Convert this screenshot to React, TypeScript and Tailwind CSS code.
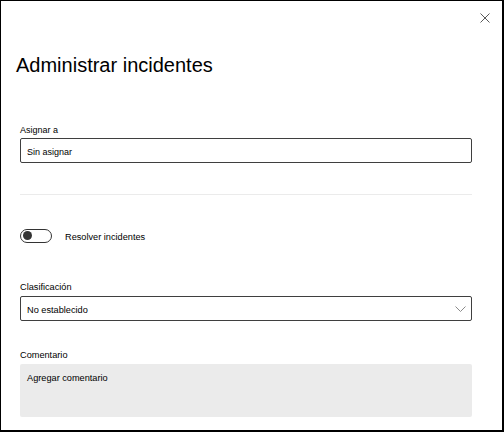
export default function App() {
  return (
    <div
      className="w-[504px] h-[432px] bg-white border-t border-l border-r-2 border-b-2 border-black flex flex-col text-black"
      style={{ fontFamily: '"Liberation Sans", Arial, sans-serif' }}
    >
      {/* Close */}
      <div className="flex justify-end pt-[12px] pr-[12px]">
        <svg width="10" height="10" viewBox="0 0 10 10" aria-label="Cerrar">
          <path d="M0.5 0.5 L9.5 9.5 M9.5 0.5 L0.5 9.5" stroke="#5a5a5a" strokeWidth="1" fill="none" />
        </svg>
      </div>

      {/* Title */}
      <h1 className="mt-[28px] pl-[15px] text-[20px] leading-[28px] font-normal text-black">
        Administrar incidentes
      </h1>

      <div className="pl-[19px] pr-[30px] flex flex-col">
        {/* Asignar a */}
        <label className="mt-[45px] text-[9px] leading-[12px]">Asignar a</label>
        <div className="mt-[2px] h-[25px] border border-[#3f3f3f] rounded-[2px] pl-[6px] pt-[7px] pb-[4px] text-[9px] leading-[12px]">
          Sin asignar
        </div>

        {/* Divider */}
        <div className="mt-[31px] h-px bg-[#ebebeb]" />

        {/* Toggle */}
        <div className="mt-[33px] flex items-center gap-[13px]">
          <div className="w-[32px] h-[14px] rounded-full border border-[#333333] flex items-center pl-[2px]">
            <div className="w-[9px] h-[9px] rounded-full bg-[#333333]" />
          </div>
          <span className="text-[9.2px] leading-[12px] pt-[3px]">Resolver incidentes</span>
        </div>

        {/* Clasificación */}
        <label className="mt-[38px] text-[9.2px] leading-[12px]">Clasificación</label>
        <div className="mt-[3px] h-[25px] border border-[#3f3f3f] rounded-[2px] pl-[6px] pr-[5px] flex items-center justify-between">
          <span className="text-[9.2px] leading-[12px] pt-[2px]">No establecido</span>
          <svg width="11" height="6" viewBox="0 0 11 6">
            <path d="M0.5 0.5 L5.5 5.5 L10.5 0.5" stroke="#8a8a8a" strokeWidth="1" fill="none" />
          </svg>
        </div>

        {/* Comentario */}
        <label className="mt-[28px] text-[9.2px] leading-[12px]">Comentario</label>
        <div className="mt-[3px] h-[53px] bg-[#ebebeb] rounded-[2px] pl-[7px] pt-[8px] text-[9.2px] leading-[12px]">
          Agregar comentario
        </div>
      </div>
    </div>
  );
}
